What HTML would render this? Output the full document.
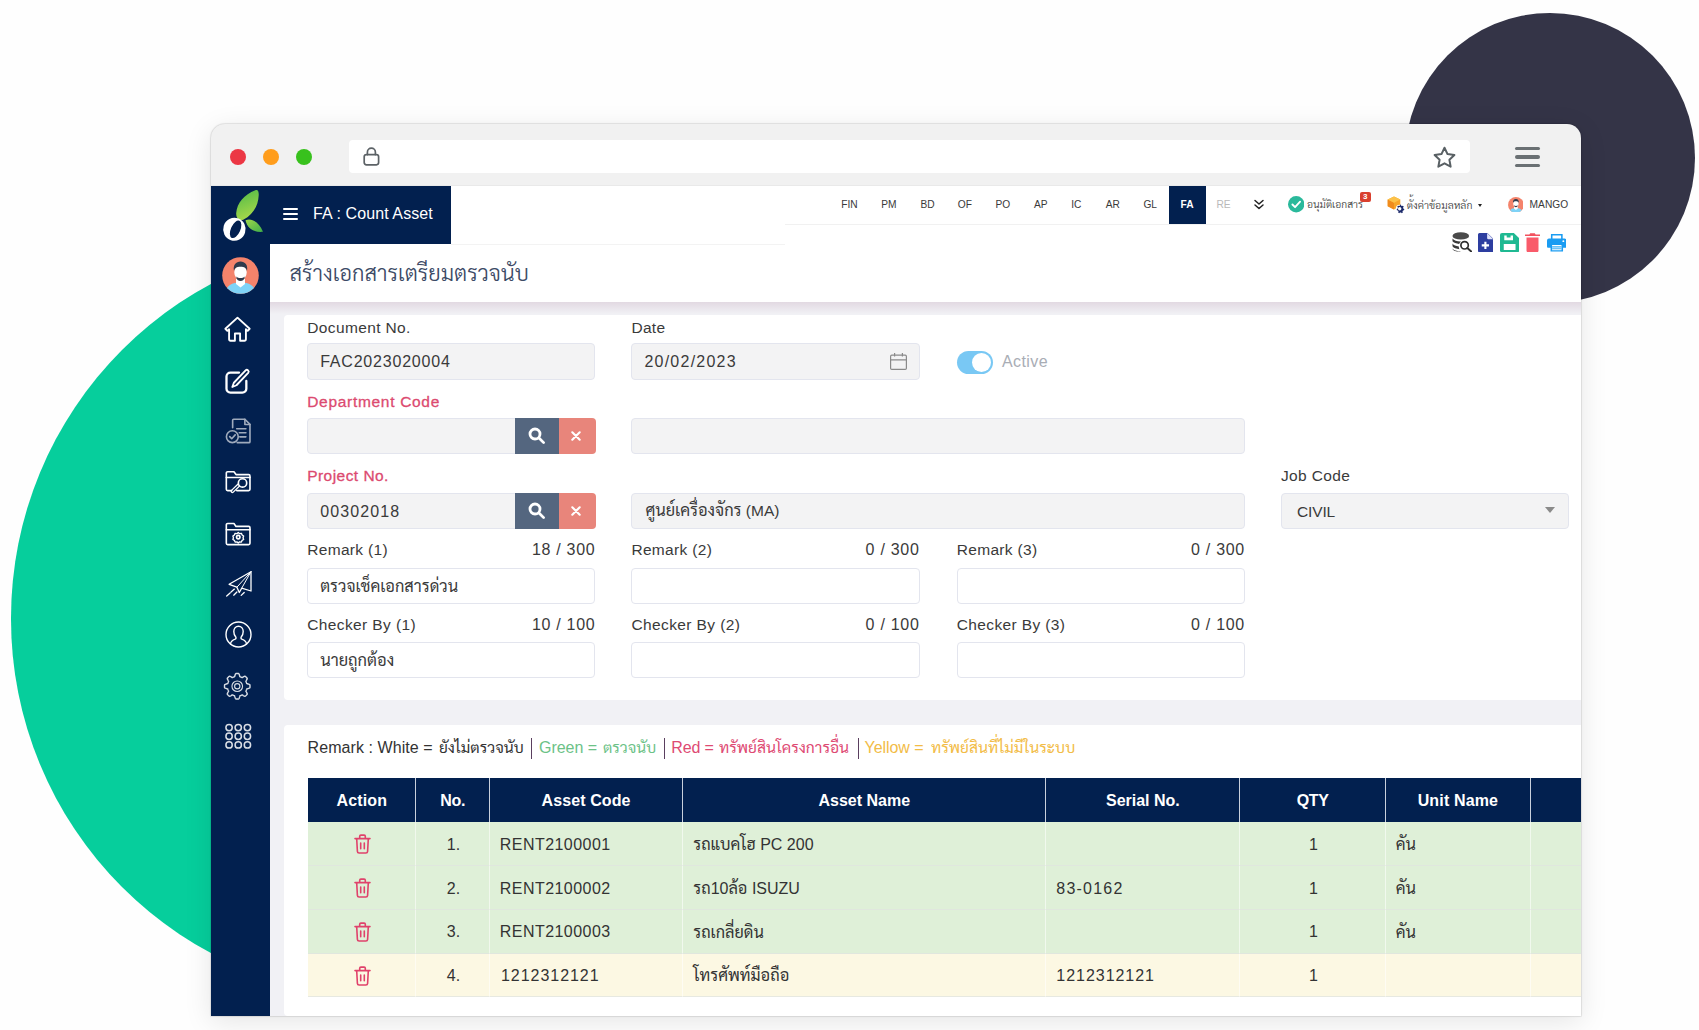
<!DOCTYPE html>
<html lang="th">
<head>
<meta charset="utf-8">
<title>FA : Count Asset</title>
<style>
*{box-sizing:border-box;margin:0;padding:0}
html,body{width:1699px;height:1030px;overflow:hidden;background:#fefefe}
body{position:relative;font-family:"Liberation Sans","Sarabun","Noto Sans Thai Looped","Loma",sans-serif;color:#3a3a3a;font-size:15px}
.abs{position:absolute}
#blobG{left:10.9px;top:239.4px;width:758.6px;height:758.6px;border-radius:50%;background:#06ce9c}
#blobD{left:1405px;top:13px;width:290px;height:290px;border-radius:50%;background:#343447}
#win{left:211px;top:124px;width:1370px;height:892px;border-radius:14px 14px 0 0;background:#f1f1f1;box-shadow:0 6px 28px rgba(0,0,0,.10),0 0 2px rgba(0,0,0,.18),0 0 0 1px rgba(0,0,0,.04);overflow:hidden}
/* all children of #win positioned relative to window (offset 211,124) */
.dot{width:16px;height:16px;border-radius:50%;top:24.6px}
#url{left:138px;top:16px;width:1121px;height:33px;background:#fff;border-radius:4px}
#app{left:0;top:62px;width:1370px;height:830px;background:#f1f1f5}
#side{left:0;top:0;width:59px;height:830px;background:#02204f}
#navtab{left:59px;top:0;width:181px;height:58px;background:#02204f;color:#fff}
#head{left:59px;top:0;width:1311px;height:116px;background:#fff}
#menu{left:0;top:0;width:1311px;height:38px}
.mi{position:absolute;top:0;height:38px;line-height:38px;font-size:10.2px;color:#3a3a3a;white-space:nowrap}
#title{left:19.4px;top:71.6px;font-size:22px;color:#3c4a66;white-space:nowrap;line-height:32px}
#hshadow{left:59px;top:116px;width:1311px;height:12px;background:linear-gradient(#e2d9e2,#f1f1f5)}
.card{background:#fff;border-radius:4px 0 0 4px}
.lbl{position:absolute;font-size:15.5px;line-height:20px;color:#3a3a3a;white-space:nowrap}
.lbl.req{color:#dc4a70;-webkit-text-stroke:.3px #dc4a70}
.cnt{position:absolute;font-size:16px;line-height:20px;color:#3a3a3a;white-space:nowrap;text-align:right}
.inp{position:absolute;height:36px;border:1px solid #e3e5ee;border-radius:4px;background:#fff;font-size:15.5px;line-height:34px;padding-left:12px;color:#3a3a3a;white-space:nowrap;overflow:hidden}
.inp.dis{background:#f3f3f4}
.btnS{position:absolute;width:44px;height:36px;background:#54667f}
.btnX{position:absolute;width:37px;height:36px;background:#e8857b;border-radius:0 4px 4px 0}
.sic{left:13.600px;width:26.500px;height:26.500px;fill:none;stroke:#fff;stroke-width:1.6;stroke-linejoin:round;stroke-linecap:round;overflow:visible}
.sic.dim{opacity:.62}
.sic.dim2{opacity:.85}
.num{font-size:16px}
.inp .num{position:relative;top:1px}
.td .num{position:relative;top:1.3px}
.td svg{position:relative;top:.9px;left:1px}
.td.c .num{left:.8px}
.tr.hd .td span{position:relative;top:.8px}
.th{font-weight:300}
.td .th{font-size:16.3px;font-weight:400}
.inp .th{font-weight:400}
#th_ma{font-size:16.4px}
.seg{position:absolute;top:0}
.seg.th{font-weight:400}
.seg.bar{width:1.5px;height:21px;top:1px;background:#5a3f5f}
.tr{display:flex;height:43.85px}
.tr.hd{height:43.6px;background:#02204f;color:#fff;font-weight:bold;font-size:16px}
.tr.g{background:#dff0d8}
.tr.y{background:#fcf8e3}
.td{flex:none;height:100%;border-right:1.5px solid rgba(255,255,255,.55);border-bottom:1.5px solid rgba(225,228,225,.75);padding:0 10px;display:flex;align-items:center;font-size:16px;white-space:nowrap;color:#333;overflow:hidden}
.tr.hd .td{justify-content:center;color:#fff;border-right:1.5px solid #c9d0dc;border-bottom:0}
.td.c{justify-content:center}
table{border-collapse:collapse}
</style>
</head>
<body>
<div id="blobG" class="abs"></div>
<div id="blobD" class="abs"></div>
<div id="win" class="abs">
  <!-- browser chrome -->
  <div class="abs dot" style="left:19px;background:#ec3744"></div>
  <div class="abs dot" style="left:52px;background:#ff9d1c"></div>
  <div class="abs dot" style="left:85px;background:#38c11d"></div>
  <div id="url" class="abs">
    <svg class="abs" style="left:13px;top:6px" width="20" height="21" viewBox="0 0 20 21" fill="none" stroke="#5c6266" stroke-width="1.7" stroke-linecap="round" stroke-linejoin="round"><rect x="2.2" y="8.6" width="14.4" height="10.2" rx="2.2"/><path d="M5.4 8.6V6.2a4 4 0 0 1 8 0v2.4"/></svg>
    <svg class="abs" style="left:1082.700px;top:4.800px" width="25" height="25" viewBox="0 0 24 24" fill="none" stroke="#596064" stroke-width="1.900" stroke-linejoin="round"><path d="M12 2.6l2.9 6.1 6.6.9-4.8 4.6 1.2 6.6L12 17.6l-5.9 3.2 1.2-6.6L2.5 9.6l6.6-.9z"/></svg>
  </div>
  <div class="abs" style="left:1304.200px;top:23.200px;width:25px;height:3.200px;border-radius:2px;background:#6a7073"></div>
  <div class="abs" style="left:1304.200px;top:31.400px;width:25px;height:3.200px;border-radius:2px;background:#6a7073"></div>
  <div class="abs" style="left:1304.200px;top:39.700px;width:25px;height:3.200px;border-radius:2px;background:#6a7073"></div>
  <div class="abs" style="left:0;top:61px;width:1370px;height:1px;background:#e9e9e9"></div>
  <div id="app" class="abs">
    <div id="head" class="abs">
      <div id="menu" class="abs">
        <div class="mi" style="left:579.4px;transform:translateX(-50%)">FIN</div>
        <div class="mi" style="left:618.8px;transform:translateX(-50%)">PM</div>
        <div class="mi" style="left:657.5px;transform:translateX(-50%)">BD</div>
        <div class="mi" style="left:694.9px;transform:translateX(-50%)">OF</div>
        <div class="mi" style="left:732.9px;transform:translateX(-50%)">PO</div>
        <div class="mi" style="left:770.8px;transform:translateX(-50%)">AP</div>
        <div class="mi" style="left:806.3px;transform:translateX(-50%)">IC</div>
        <div class="mi" style="left:842.8px;transform:translateX(-50%)">AR</div>
        <div class="mi" style="left:880.2px;transform:translateX(-50%)">GL</div>
        <div class="abs" style="left:899px;top:0;width:36.500px;height:38px;background:#02204f"></div>
        <div class="mi" style="left:917.1px;transform:translateX(-50%);color:#fff;font-weight:bold">FA</div>
        <div class="mi" style="left:953.5px;transform:translateX(-50%);color:#b9b9b9">RE</div>
        <svg class="abs" style="left:982.500px;top:12.500px" width="12" height="12" viewBox="0 0 12 12" fill="none" stroke="#222" stroke-width="1.500" stroke-linecap="round" stroke-linejoin="round"><path d="M2 1.500l4 3.500 4-3.500M2 6l4 3.500 4-3.500"/></svg>
        <svg class="abs" style="left:1017.500px;top:10.300px" width="16.400" height="16.400" viewBox="0 0 16 16"><circle cx="8" cy="8" r="8" fill="#2ab99b"/><path d="M4.300 8.300l2.600 2.600 4.900-5.300" fill="none" stroke="#fff" stroke-width="1.800" stroke-linecap="round" stroke-linejoin="round"/></svg>
        <div class="mi th" id="m_ap" style="left:1037px;font-size:10.36px">อนุมัติเอกสาร</div>
        <div class="abs" style="left:1089.600px;top:5.700px;width:11.200px;height:10.200px;background:#d9402f;border-radius:2px;color:#fff;font-size:8px;font-weight:bold;line-height:10.500px;text-align:center">3</div>
        <svg class="abs" style="left:1116.500px;top:9.800px" width="18" height="18" viewBox="0 0 18 18"><path d="M7 .6l6.300 3v6.600L7 13.400.7 10.200V3.600z" fill="#f7a62b"/><path d="M.7 3.600L7 6.800v6.600L.7 10.200z" fill="#f08b1d"/><path d="M7 .6l6.300 3L7 6.800.7 3.600z" fill="#fcc24a"/><circle cx="12.700" cy="12.700" r="3.900" fill="#fff"/><path d="M12.700 8.300l1 .2.300 1.100.9.500 1.100-.4.700.9-.6 1 .2 1 1 .6-.2 1.100-1.100.3-.5.900.3 1.100-.9.600-.9-.7h-1l-.9.700-.9-.6.300-1.100-.5-.9-1.100-.3-.2-1.100 1-.6.200-1-.6-1 .7-.9 1.100.4.900-.5.300-1.100z" fill="#1c2a6b"/><circle cx="12.700" cy="12.700" r="1.700" fill="#fff"/></svg>
        <div class="mi th" id="m_set" style="left:1136.700px;font-size:10.55px">ตั้งค่าข้อมูลหลัก</div>
        <div class="abs" style="left:1207.600px;top:17.600px;width:0;height:0;border-left:2.700px solid transparent;border-right:2.700px solid transparent;border-top:3.200px solid #222"></div>
        <svg class="abs" style="left:1237.500px;top:10.500px" width="15.800" height="15.800" viewBox="0 0 37 37"><defs><clipPath id="avc2"><circle cx="18.500" cy="18.500" r="18.300"/></clipPath></defs><circle cx="18.500" cy="18.500" r="18.300" fill="#f4836b"/><g clip-path="url(#avc2)"><path d="M3 37C4 28 10 25.500 18.500 25.500S33 28 34 37z" fill="#7fd3f7"/><path d="M14 22h9v5l-4.500 3.500L14 27z" fill="#fff"/><ellipse cx="18.500" cy="15.500" rx="6.200" ry="7.600" fill="#fff"/><path d="M12 14c-1.200-6 2-9.500 6.500-9.500S26.200 8 25 14c-.8-3-2.500-4.200-6.500-4.200S12.800 11 12 14z" fill="#2f3a4c"/><path d="M14.200 19.500c1.200 1.200 2.600 1.600 4.300 1.600s3.100-.4 4.300-1.600c-.3 3-2 4.600-4.300 4.600s-4-1.600-4.300-4.600z" fill="#2f3a4c"/></g></svg>
        <div class="mi" id="m_mango" style="left:1259.600px">MANGO</div>
      </div>
      <div class="abs" style="left:515px;top:38px;width:796px;height:1px;background:#f1f1f1"></div>
      <div class="abs" style="left:181px;top:57.500px;width:334px;height:1px;background:#f3f3f3"></div>
      <!-- toolbar icons -->
      <svg class="abs" style="left:1181.800px;top:46px" width="20" height="20" viewBox="0 0 20 20"><ellipse cx="8.800" cy="3.900" rx="8.300" ry="3.700" fill="#4a4a4a"/><path d="M.500 6.600c1.500 2.200 5 2.900 8.500 2.800-.9.700-1.500 1.500-1.900 2.600C4.300 11.700 1.600 10.800.500 9.300zM.500 11.600c1 1.700 3.600 2.600 6.300 2.900 0 1 .2 1.900.6 2.700-3-.3-5.800-1.200-6.900-2.900zM.500 16.600c1.200 1.800 4.300 2.600 7.500 2.800.5.300 1 .5 1.500.6H8.800c-4.600 0-8.300-1.500-8.300-3.400z" fill="#3a3a3a"/><circle cx="12.600" cy="13.300" r="3.700" fill="none" stroke="#2f2f2f" stroke-width="1.700"/><path d="M15.300 16l3.900 3.500" stroke="#2f2f2f" stroke-width="1.900" stroke-linecap="round"/></svg>
      <svg class="abs" style="left:1208px;top:46.800px" width="15.200" height="19.400" viewBox="0 0 15 19"><path d="M1.500 0h7.800L15 5.600V17.500A1.500 1.500 0 0 1 13.500 19h-12A1.500 1.500 0 0 1 0 17.500v-16A1.500 1.500 0 0 1 1.500 0z" fill="#2d3ea0"/><path d="M9 0l6 6H10.200A1.200 1.200 0 0 1 9 4.800z" fill="#dfe3fa"/><path d="M7.300 8.600v7.200M3.700 12.200h7.200" stroke="#fff" stroke-width="2.100"/></svg>
      <svg class="abs" style="left:1229.700px;top:46.800px" width="19.300" height="19.400" viewBox="0 0 19 19"><path d="M2 0h11.600L19 5.200V17a2 2 0 0 1-2 2H2a2 2 0 0 1-2-2V2a2 2 0 0 1 2-2z" fill="#1fb992"/><path d="M4.200 2.400h2.400v2h3.800v-2h2.400v4.600H4.200zM3.700 10.800h11.600v5.900H3.700z" fill="#fff"/></svg>
      <svg class="abs" style="left:1255.200px;top:46.800px" width="15" height="19.400" viewBox="0 0 15 19"><path d="M5.200 0h4.600l.8 1.300H15v1.500H0V1.300h4.400z" fill="#f2525f"/><path d="M1.500 4.300h12V17.300A1.700 1.700 0 0 1 11.800 19H3.200a1.700 1.700 0 0 1-1.700-1.700z" fill="#f95b6a"/></svg>
      <svg class="abs" style="left:1276.600px;top:48px" width="19.600" height="17.600" viewBox="0 0 20 18"><path d="M4 0h12v5H4z" fill="#1a9cf2"/><path d="M5.600 1.600h8.800v3.400H5.600z" fill="#fff"/><path d="M2 4.600h16a2 2 0 0 1 2 2V13a1 1 0 0 1-1 1H1a1 1 0 0 1-1-1V6.600a2 2 0 0 1 2-2z" fill="#1a9cf2"/><circle cx="16.700" cy="7.300" r="1" fill="#fff"/><path d="M3.600 9.800h12.800V18H3.600z" fill="#1a9cf2"/><path d="M5.200 11.300h9.600v5.200H5.200z" fill="#fff"/><path d="M5.200 12.600h9.600v1.100H5.200zM5.200 14.600h9.600v1.100H5.200z" fill="#3fb0f5"/></svg>
      <div id="title" style="font-size:21.94px" class="abs th">สร้างเอกสารเตรียมตรวจนับ</div>
    </div>
    <div id="hshadow" class="abs"></div>
    <div id="navtab" class="abs">
      <div class="abs" style="left:13px;top:22px;width:15px;height:2.4px;background:#fff;border-radius:1px"></div>
      <div class="abs" style="left:13px;top:27px;width:15px;height:2.4px;background:#fff;border-radius:1px"></div>
      <div class="abs" style="left:13px;top:32px;width:15px;height:2.4px;background:#fff;border-radius:1px"></div>
      <div class="abs" id="navtxt" style="left:43px;top:17.400px;font-size:16px;line-height:22px;white-space:nowrap;letter-spacing:0.100px">FA : Count Asset</div>
    </div>
    <div id="side" class="abs">
      <!-- logo -->
      <svg class="abs" style="left:8px;top:0" width="48" height="58" viewBox="0 0 48 58">
        <defs><linearGradient id="lg1" x1="0" y1="0" x2="0.3" y2="1"><stop offset="0" stop-color="#4db848"/><stop offset="1" stop-color="#a4d84a"/></linearGradient>
        <linearGradient id="lg2" x1="0" y1="0" x2="1" y2="1"><stop offset="0" stop-color="#9fd64b"/><stop offset="1" stop-color="#3fae49"/></linearGradient></defs>
        <path d="M37.600 4.200C40.600 3.200 41.200 6 41 9.500C40.400 20 35.500 28.500 25.500 33.800C21 34.800 18.200 31.800 18.500 27C19.300 17 26.500 8.500 37.600 4.200z" fill="url(#lg1)" transform="translate(-1.300 0)"/>
        <path d="M26.5 34.2C33 31.5 40 36.5 44 45.8C36 46.5 28.5 43.5 26.5 34.2z" fill="url(#lg2)"/>
        <ellipse cx="15.400" cy="43.300" rx="11.200" ry="11.500" transform="rotate(18 15.400 43.300)" fill="#fff"/>
        <ellipse cx="16.600" cy="43.300" rx="4.700" ry="9.400" transform="rotate(24 16.600 43.300)" fill="#02204f"/>
      </svg>
      <!-- avatar -->
      <svg class="abs" style="left:11px;top:71px" width="37" height="37" viewBox="0 0 37 37">
        <defs><clipPath id="avc"><circle cx="18.5" cy="18.5" r="18.3"/></clipPath></defs>
        <circle cx="18.5" cy="18.5" r="18.3" fill="#f4836b"/>
        <g clip-path="url(#avc)">
          <path d="M3 37C4 28 10 25.5 18.5 25.5S33 28 34 37z" fill="#7fd3f7"/>
          <path d="M14 22h9v5l-4.5 3.5L14 27z" fill="#fff"/>
          <ellipse cx="18.5" cy="15.5" rx="6.2" ry="7.6" fill="#fff"/>
          <path d="M12 14c-1.2-6 2-9.5 6.500-9.500S26.200 8 25 14c-.8-3-2.500-4.200-6.500-4.200S12.800 11 12 14z" fill="#2f3a4c"/>
          <path d="M14.200 19.500c1.200 1.200 2.600 1.600 4.300 1.600s3.100-.4 4.300-1.600c-.3 3-2 4.600-4.300 4.600s-4-1.600-4.300-4.600z" fill="#2f3a4c"/>
        </g>
      </svg>
      <!-- side icons -->
      <svg class="abs sic" style="top:130.200px;left:12.700px;width:27px;height:27px;stroke-width:1.800" viewBox="0 0 26 26"><path d="M13 1.6L1.3 12.3l1.9 2 1.700-1.500v9.700a1.300 1.300 0 0 0 1.300 1.300h4.300v-7h5v7h4.300a1.300 1.300 0 0 0 1.300-1.300v-9.700l1.700 1.500 1.900-2z"/></svg>
      <svg class="abs sic" style="top:181.500px;left:13px;width:27px;height:27px;stroke-width:2.200" viewBox="0 0 26 26"><path d="M14.500 4.400H6.200a3.800 3.800 0 0 0-3.800 3.800v11.700a3.800 3.800 0 0 0 3.800 3.800h11.500a3.800 3.800 0 0 0 3.800-3.800v-7.400"/><path d="M20.800 2.300a1.700 1.700 0 0 1 2.500 2.300L12 16.600l-4 1.700 1.500-4.100z" stroke-width="1.800"/></svg>
      <svg class="abs sic dim" style="top:232px" viewBox="0 0 26 26"><path d="M7.500 9.500V2.200a1 1 0 0 1 1-1h11l5 5v17a1 1 0 0 1-1 1H12"/><path d="M19.500 1.400v5h5"/><path d="M11.500 10.500h9M14 14.500h6.500M14.500 18.500h6"/><circle cx="7.200" cy="18.300" r="5.800"/><path d="M4.600 18.300l2 2 3.400-3.700"/></svg>
      <svg class="abs sic" style="top:284px" viewBox="0 0 26 26"><path d="M6.500 20.200H2.600a1.300 1.300 0 0 1-1.300-1.300V3a1.300 1.300 0 0 1 1.300-1.300h6.200l2 2.800h12.400a1.300 1.300 0 0 1 1.300 1.300v13.100a1.300 1.300 0 0 1-1.300 1.300H11.500"/><path d="M1.300 7.300h23.200"/><circle cx="17.200" cy="12.700" r="4.100"/><path d="M14.300 15.700l-6.200 6a1.200 1.200 0 0 1-1.700-1.700l6.200-6" stroke-width="1.300"/></svg>
      <svg class="abs sic" style="top:335px" viewBox="0 0 26 26"><path d="M2.600 23.200a1.300 1.300 0 0 1-1.300-1.300V3.800a1.300 1.300 0 0 1 1.300-1.300h6.200l2 2.800h12.400a1.300 1.300 0 0 1 1.300 1.300v15.300a1.300 1.300 0 0 1-1.300 1.300z"/><path d="M1.300 8.600h23.200"/><circle cx="13" cy="15.800" r="1.700"/><path d="M13 11.200l1.300 1.200 1.800-.3.700 1.700 1.500 1-0.600 1.600.6 1.700-1.500.9-.7 1.700-1.800-.3-1.300 1.200-1.300-1.200-1.800.3-.7-1.700-1.500-.9.600-1.700-.6-1.600 1.500-1 .7-1.700 1.800.3z" stroke-width="1.300"/></svg>
      <svg class="abs sic" style="top:384px;width:28px;height:28px;stroke-width:1.300" viewBox="0 0 28 28"><path d="M26 1.700L4.100 14.300l7.800 2.900 2.400 5.300 2.400-4.300L26 21z"/><path d="M26 1.700L11.900 17.200M26 1.700L16.700 18.200" stroke-width="1"/><path d="M9.400 19.100L1.200 26.400M11.900 22L8 25.900M19.200 22.500l-3 2.900" stroke-dasharray="4.500 1.300"/></svg>
      <svg class="abs sic" style="top:435px;width:27px;height:27px;stroke-width:1.400" viewBox="0 0 27 27"><circle cx="13.500" cy="13.500" r="12.500"/><path d="M5.500 23c.3-3 2.300-4 4.700-4.800 1-.4 1-1.600.4-2.500-1.200-1.500-1.800-3.300-1.800-5.200 0-3 2-5.200 4.700-5.200s4.700 2.200 4.700 5.200c0 1.900-.6 3.700-1.800 5.200-.6.900-.6 2.100.4 2.500 2.400.8 4.400 1.800 4.700 4.800"/></svg>
      <svg class="abs sic dim2" style="top:486.500px;left:13.300px;stroke-width:1.400" viewBox="0 0 26 26"><circle cx="13" cy="13" r="5.200" stroke-width="1.100"/><circle cx="13" cy="13" r="2.600" stroke-width="1.100"/><path d="M13.00 0.50L13.33 0.50L13.65 0.52L13.98 0.54L14.31 0.57L14.61 0.75L14.86 1.27L15.07 1.83L15.25 2.40L15.41 2.96L15.55 3.50L15.75 3.70L16.00 3.77L16.24 3.86L16.48 3.94L16.71 4.04L16.95 4.14L17.18 4.24L17.40 4.36L17.63 4.48L17.92 4.48L18.39 4.20L18.90 3.91L19.44 3.64L19.98 3.39L20.52 3.19L20.87 3.29L21.12 3.49L21.36 3.71L21.60 3.93L21.84 4.16L22.07 4.40L22.29 4.64L22.51 4.88L22.71 5.13L22.81 5.48L22.61 6.02L22.36 6.56L22.09 7.10L21.80 7.61L21.52 8.08L21.52 8.37L21.64 8.60L21.76 8.82L21.86 9.05L21.96 9.29L22.06 9.52L22.14 9.76L22.23 10.00L22.30 10.25L22.50 10.45L23.04 10.59L23.60 10.75L24.17 10.93L24.73 11.14L25.25 11.39L25.43 11.69L25.46 12.02L25.48 12.35L25.50 12.67L25.50 13.00L25.50 13.33L25.48 13.65L25.46 13.98L25.43 14.31L25.25 14.61L24.73 14.86L24.17 15.07L23.60 15.25L23.04 15.41L22.50 15.55L22.30 15.75L22.23 16.00L22.14 16.24L22.06 16.48L21.96 16.71L21.86 16.95L21.76 17.18L21.64 17.40L21.52 17.63L21.52 17.92L21.80 18.39L22.09 18.90L22.36 19.44L22.61 19.98L22.81 20.52L22.71 20.87L22.51 21.12L22.29 21.36L22.07 21.60L21.84 21.84L21.60 22.07L21.36 22.29L21.12 22.51L20.87 22.71L20.52 22.81L19.98 22.61L19.44 22.36L18.90 22.09L18.39 21.80L17.92 21.52L17.63 21.52L17.40 21.64L17.18 21.76L16.95 21.86L16.71 21.96L16.48 22.06L16.24 22.14L16.00 22.23L15.75 22.30L15.55 22.50L15.41 23.04L15.25 23.60L15.07 24.17L14.86 24.73L14.61 25.25L14.31 25.43L13.98 25.46L13.65 25.48L13.33 25.50L13.00 25.50L12.67 25.50L12.35 25.48L12.02 25.46L11.69 25.43L11.39 25.25L11.14 24.73L10.93 24.17L10.75 23.60L10.59 23.04L10.45 22.50L10.25 22.30L10.00 22.23L9.76 22.14L9.52 22.06L9.29 21.96L9.05 21.86L8.82 21.76L8.60 21.64L8.37 21.52L8.08 21.52L7.61 21.80L7.10 22.09L6.56 22.36L6.02 22.61L5.48 22.81L5.13 22.71L4.88 22.51L4.64 22.29L4.40 22.07L4.16 21.84L3.93 21.60L3.71 21.36L3.49 21.12L3.29 20.87L3.19 20.52L3.39 19.98L3.64 19.44L3.91 18.90L4.20 18.39L4.48 17.92L4.48 17.63L4.36 17.40L4.24 17.18L4.14 16.95L4.04 16.71L3.94 16.48L3.86 16.24L3.77 16.00L3.70 15.75L3.50 15.55L2.96 15.41L2.40 15.25L1.83 15.07L1.27 14.86L0.75 14.61L0.57 14.31L0.54 13.98L0.52 13.65L0.50 13.33L0.50 13.00L0.50 12.67L0.52 12.35L0.54 12.02L0.57 11.69L0.75 11.39L1.27 11.14L1.83 10.93L2.40 10.75L2.96 10.59L3.50 10.45L3.70 10.25L3.77 10.00L3.86 9.76L3.94 9.52L4.04 9.29L4.14 9.05L4.24 8.82L4.36 8.60L4.48 8.37L4.48 8.08L4.20 7.61L3.91 7.10L3.64 6.56L3.39 6.02L3.19 5.48L3.29 5.13L3.49 4.88L3.71 4.64L3.93 4.40L4.16 4.16L4.40 3.93L4.64 3.71L4.88 3.49L5.13 3.29L5.48 3.19L6.02 3.39L6.56 3.64L7.10 3.91L7.61 4.20L8.08 4.48L8.37 4.48L8.60 4.36L8.82 4.24L9.05 4.14L9.29 4.04L9.52 3.94L9.76 3.86L10.00 3.77L10.25 3.70L10.45 3.50L10.59 2.96L10.75 2.40L10.93 1.83L11.14 1.27L11.39 0.75L11.69 0.57L12.02 0.54L12.35 0.52L12.67 0.50z"/></svg>
      <svg class="abs sic dim2" style="top:537px;left:13.600px;stroke-width:1.500" viewBox="0 0 26 26"><circle cx="4" cy="4.500" r="3.100"/><circle cx="13" cy="4.500" r="3.100"/><circle cx="22" cy="4.500" r="3.100"/><circle cx="4" cy="13" r="3.100"/><circle cx="13" cy="13" r="3.100"/><circle cx="22" cy="13" r="3.100"/><circle cx="4" cy="21.500" r="3.100"/><circle cx="13" cy="21.500" r="3.100"/><circle cx="22" cy="21.500" r="3.100"/></svg>
    </div>
    <div id="card1" class="abs card" style="left:73px;top:129px;width:1297px;height:385px">
<div class="lbl " id="l_doc" style="left:23.2px;top:2.5px;letter-spacing:0.377px">Document No.</div>
<div class="lbl" id="l_date" style="left:347.4px;top:2.5px;letter-spacing:0.312px">Date</div>
<div class="inp dis" style="left:23.2px;top:28.3px;width:288.2px;height:36.6px;line-height:34.6px;"><span id="t_fac" style="letter-spacing:0.792px" class="num">FAC2023020004</span></div>
<div class="inp dis" style="left:347.4px;top:28.3px;width:288.2px;height:36.6px;line-height:34.6px;"><span id="t_date" style="letter-spacing:1.242px" class="num">20/02/2023</span></div>
<svg class="abs" style="left:605.0px;top:37.0px" width="19" height="19" viewBox="0 0 19 19" fill="none" stroke="#8a8a8a" stroke-width="1.200"><rect x="1.600" y="3.200" width="15.800" height="14.200" rx="1.200"/><path d="M1.600 7.800h15.800M5.600 1v3.600M13.400 1v3.600"/></svg>
<div class="abs" style="left:672.8px;top:35.8px;width:36px;height:23px;border-radius:12px;background:#79c8f4"><div class="abs" style="right:2px;top:2px;width:19px;height:19px;border-radius:50%;background:#fff"></div></div>
<div class="lbl" id="l_act" style="left:718.0px;top:36.8px;color:#a9adb5;font-size:16px;letter-spacing:0.404px">Active</div>
<div class="lbl req" id="l_dep" style="left:23.2px;top:76.6px;letter-spacing:0.697px">Department Code</div>
<div class="inp dis" style="left:23.2px;top:102.8px;width:288.2px;height:36.0px;line-height:34.0px;"></div>
<div class="btnS" style="left:231.0px;top:102.8px"><svg class="abs" style="left:13px;top:9.400px" width="17.500" height="17.500" viewBox="0 0 15 15" fill="none" stroke="#fff" stroke-width="2.400" stroke-linecap="round"><circle cx="6" cy="6" r="4.300"/><path d="M9.400 9.400l4 4"/></svg></div><div class="btnX" style="left:275.0px;top:102.8px"><svg class="abs" style="left:11.700px;top:12.800px" width="10" height="10" viewBox="0 0 10 10" fill="none" stroke="#fff" stroke-width="2.100" stroke-linecap="round"><path d="M1.300 1.300l7.400 7.400M8.700 1.300l-7.400 7.400"/></svg></div>
<div class="inp dis" style="left:347.4px;top:102.8px;width:613.2px;height:36.0px;line-height:34.0px;"></div>
<div class="lbl req" id="l_prj" style="left:23.2px;top:150.7px;letter-spacing:0.457px">Project No.</div>
<div class="inp dis" style="left:23.2px;top:178.0px;width:288.2px;height:35.5px;line-height:33.5px;"><span id="t_prj" style="letter-spacing:1.114px" class="num">00302018</span></div>
<div class="btnS" style="left:231.0px;top:178.0px;height:35.500px"><svg class="abs" style="left:13px;top:9.400px" width="17.500" height="17.500" viewBox="0 0 15 15" fill="none" stroke="#fff" stroke-width="2.400" stroke-linecap="round"><circle cx="6" cy="6" r="4.300"/><path d="M9.400 9.400l4 4"/></svg></div><div class="btnX" style="left:275.0px;top:178.0px;height:35.500px"><svg class="abs" style="left:11.700px;top:12.800px" width="10" height="10" viewBox="0 0 10 10" fill="none" stroke="#fff" stroke-width="2.100" stroke-linecap="round"><path d="M1.300 1.300l7.400 7.400M8.700 1.300l-7.400 7.400"/></svg></div>
<div class="inp dis" style="left:347.4px;top:178.0px;width:613.2px;height:35.5px;line-height:33.5px;padding-left:13px"><span id="t_ma"><span class="th" id="th_ma">ศูนย์เครื่องจักร</span> (MA)</span></div>
<div class="lbl " id="l_job" style="left:997.0px;top:150.7px;letter-spacing:0.368px">Job Code</div>
<div class="inp dis" style="left:997.0px;top:178.0px;width:288.2px;height:35.5px;line-height:33.5px;padding-left:15px"><span class="num" id="t_civil" style="font-size:15.5px;letter-spacing:-0.153px">CIVIL</span></div>
<div class="abs" style="left:1261.0px;top:192.3px;width:0;height:0;border-left:5.700px solid transparent;border-right:5.700px solid transparent;border-top:6px solid #8a8a8a"></div>
<div class="lbl " id="l_rem1" style="left:23.2px;top:225.1px;letter-spacing:0.328px">Remark (1)</div>
<div class="cnt" id="c1" style="left:211.4px;width:100px;top:224.8px;letter-spacing:0.696px">18 / 300</div>
<div class="inp " style="left:23.2px;top:252.8px;width:288.2px;height:36.0px;line-height:34.0px;"><span id="t_rem1" style="font-size:16.35px" class="th">ตรวจเช็คเอกสารด่วน</span></div>
<div class="lbl " id="l_rem2" style="left:347.4px;top:225.1px;letter-spacing:0.328px">Remark (2)</div>
<div class="cnt" id="c2" style="left:535.6px;width:100px;top:224.8px;letter-spacing:0.723px">0 / 300</div>
<div class="inp " style="left:347.4px;top:252.8px;width:288.2px;height:36.0px;line-height:34.0px;"></div>
<div class="lbl " id="l_rem3" style="left:672.8px;top:225.1px;letter-spacing:0.308px">Remark (3)</div>
<div class="cnt" id="c3" style="left:861.0px;width:100px;top:224.8px;letter-spacing:0.723px">0 / 300</div>
<div class="inp " style="left:672.8px;top:252.8px;width:288.2px;height:36.0px;line-height:34.0px;"></div>
<div class="lbl " id="l_chk1" style="left:23.2px;top:300.3px;letter-spacing:0.395px">Checker By (1)</div>
<div class="cnt" id="c4" style="left:211.4px;width:100px;top:300.0px;letter-spacing:0.696px">10 / 100</div>
<div class="inp " style="left:23.2px;top:326.8px;width:288.2px;height:36.0px;line-height:34.0px;"><span id="t_chk1" style="font-size:16.46px" class="th">นายถูกต้อง</span></div>
<div class="lbl " id="l_chk2" style="left:347.4px;top:300.3px;letter-spacing:0.395px">Checker By (2)</div>
<div class="cnt" id="c5" style="left:535.6px;width:100px;top:300.0px;letter-spacing:0.723px">0 / 100</div>
<div class="inp " style="left:347.4px;top:326.8px;width:288.2px;height:36.0px;line-height:34.0px;"></div>
<div class="lbl " id="l_chk3" style="left:672.8px;top:300.3px;letter-spacing:0.373px">Checker By (3)</div>
<div class="cnt" id="c6" style="left:861.0px;width:100px;top:300.0px;letter-spacing:0.723px">0 / 100</div>
<div class="inp " style="left:672.8px;top:326.8px;width:288.2px;height:36.0px;line-height:34.0px;"></div>
</div>
    <div id="card2" class="abs card" style="left:73px;top:539px;width:1297px;height:291px;overflow:hidden">
<div class="abs" id="rmk" style="left:23.6px;top:11.8px;font-size:16px;line-height:22px;white-space:nowrap;color:#333"><span id="r1" class="seg" style="left:0;letter-spacing:0.069px">Remark : White = </span><span id="r1t" class="seg th" style="left:131.3px;font-size:15.51px">ยังไม่ตรวจนับ</span><span class="seg bar" style="left:223.4px"></span><span id="r2" class="seg" style="left:231.4px;color:#6cc287;letter-spacing:-0.021px">Green = </span><span id="r2t" class="seg th" style="left:295.4px;color:#6cc287;font-size:15.46px">ตรวจนับ</span><span class="seg bar" style="left:356.2px"></span><span id="r3" class="seg" style="left:363.7px;color:#de4a73;letter-spacing:-0.140px">Red = </span><span id="r3t" class="seg th" style="left:411.4px;color:#de4a73;font-size:15.60px">ทรัพย์สินโครงการอื่น</span><span class="seg bar" style="left:550.0px"></span><span id="r4" class="seg" style="left:557.0px;color:#f2bc47;letter-spacing:-0.073px">Yellow = </span><span id="r4t" class="seg th" style="left:623.4px;color:#f2bc47;font-size:15.60px">ทรัพย์สินที่ไม่มีในระบบ</span></div>
<div class="abs" id="tbl" style="left:24.2px;top:53.4px;width:1367.8px">
<div class="tr hd"><div class="td" style="width:108.3px"><span id="h0" style="letter-spacing:0.136px">Action</span></div><div class="td" style="width:73.3px"><span id="h1" style="letter-spacing:-0.294px">No.</span></div><div class="td" style="width:193.5px"><span id="h2" style="letter-spacing:0.097px">Asset Code</span></div><div class="td" style="width:363.0px"><span id="h3">Asset Name</span></div><div class="td" style="width:194.2px"><span id="h4">Serial No.</span></div><div class="td" style="width:145.3px"><span id="h5" style="letter-spacing:-0.464px">QTY</span></div><div class="td" style="width:145.3px"><span id="h6" style="letter-spacing:0.153px">Unit Name</span></div><div class="td" style="width:144.9px"><span id="h7"></span></div></div>
<div class="tr g"><div class="td c" style="width:108.3px"><span class=""><svg width="17" height="20" viewBox="0 0 17 20" fill="none" stroke="#e0426b" stroke-width="1.600" stroke-linecap="round" stroke-linejoin="round" style="vertical-align:middle"><path d="M1 4.600h15M5.700 4.400V2.300a1.200 1.200 0 0 1 1.200-1.200h3.200a1.200 1.200 0 0 1 1.200 1.200v2.100M2.700 4.800l.7 12.600a1.700 1.700 0 0 0 1.700 1.600h6.800a1.700 1.700 0 0 0 1.700-1.600l.7-12.600M6.700 9v5.800M10.300 9v5.800"/></svg></span></div><div class="td c" style="width:73.3px"><span id="d0_1" class="num">1.</span></div><div class="td l" style="width:193.5px"><span id="d0_2" style="letter-spacing:0.451px" class="num">RENT2100001</span></div><div class="td l" style="width:363.0px"><span id="d0_3" class=""><span class="th" id="th_a1">รถแบคโฮ</span> PC 200</span></div><div class="td l" style="width:194.2px"><span class="num"></span></div><div class="td c" style="width:145.3px"><span id="d0_5" class="num">1</span></div><div class="td l" style="width:145.3px"><span id="d0_6" class=""><span class="th kan">คัน</span></span></div><div class="td l" style="width:144.9px"><span class=""></span></div></div>
<div class="tr g"><div class="td c" style="width:108.3px"><span class=""><svg width="17" height="20" viewBox="0 0 17 20" fill="none" stroke="#e0426b" stroke-width="1.600" stroke-linecap="round" stroke-linejoin="round" style="vertical-align:middle"><path d="M1 4.600h15M5.700 4.400V2.300a1.200 1.200 0 0 1 1.200-1.200h3.200a1.200 1.200 0 0 1 1.200 1.200v2.100M2.700 4.800l.7 12.600a1.700 1.700 0 0 0 1.700 1.600h6.800a1.700 1.700 0 0 0 1.700-1.600l.7-12.600M6.700 9v5.800M10.300 9v5.800"/></svg></span></div><div class="td c" style="width:73.3px"><span id="d1_1" class="num">2.</span></div><div class="td l" style="width:193.5px"><span id="d1_2" style="letter-spacing:0.451px" class="num">RENT2100002</span></div><div class="td l" style="width:363.0px"><span id="d1_3" class=""><span class="th" id="th_a2a">รถ</span>10<span class="th" id="th_a2b">ล้อ</span> ISUZU</span></div><div class="td l" style="width:194.2px"><span id="d1_4" style="letter-spacing:1.226px" class="num">83-0162</span></div><div class="td c" style="width:145.3px"><span id="d1_5" class="num">1</span></div><div class="td l" style="width:145.3px"><span id="d1_6" class=""><span class="th kan">คัน</span></span></div><div class="td l" style="width:144.9px"><span class=""></span></div></div>
<div class="tr g"><div class="td c" style="width:108.3px"><span class=""><svg width="17" height="20" viewBox="0 0 17 20" fill="none" stroke="#e0426b" stroke-width="1.600" stroke-linecap="round" stroke-linejoin="round" style="vertical-align:middle"><path d="M1 4.600h15M5.700 4.400V2.300a1.200 1.200 0 0 1 1.200-1.200h3.200a1.200 1.200 0 0 1 1.200 1.200v2.100M2.700 4.800l.7 12.600a1.700 1.700 0 0 0 1.700 1.600h6.800a1.700 1.700 0 0 0 1.700-1.600l.7-12.600M6.700 9v5.800M10.300 9v5.800"/></svg></span></div><div class="td c" style="width:73.3px"><span id="d2_1" class="num">3.</span></div><div class="td l" style="width:193.5px"><span id="d2_2" style="letter-spacing:0.451px" class="num">RENT2100003</span></div><div class="td l" style="width:363.0px"><span id="d2_3" class=""><span class="th" id="th_a3" style="font-size:16.28px">รถเกลี่ยดิน</span></span></div><div class="td l" style="width:194.2px"><span class="num"></span></div><div class="td c" style="width:145.3px"><span id="d2_5" class="num">1</span></div><div class="td l" style="width:145.3px"><span id="d2_6" class=""><span class="th kan">คัน</span></span></div><div class="td l" style="width:144.9px"><span class=""></span></div></div>
<div class="tr y"><div class="td c" style="width:108.3px"><span class=""><svg width="17" height="20" viewBox="0 0 17 20" fill="none" stroke="#e0426b" stroke-width="1.600" stroke-linecap="round" stroke-linejoin="round" style="vertical-align:middle"><path d="M1 4.600h15M5.700 4.400V2.300a1.200 1.200 0 0 1 1.200-1.200h3.200a1.200 1.200 0 0 1 1.200 1.200v2.100M2.700 4.800l.7 12.600a1.700 1.700 0 0 0 1.700 1.600h6.800a1.700 1.700 0 0 0 1.700-1.600l.7-12.600M6.700 9v5.800M10.300 9v5.800"/></svg></span></div><div class="td c" style="width:73.3px"><span id="d3_1" class="num">4.</span></div><div class="td l" style="width:193.5px"><span id="d3_2" style="letter-spacing:0.962px;margin-left:1.2px" class="num">1212312121</span></div><div class="td l" style="width:363.0px"><span id="d3_3" class=""><span class="th" id="th_a4" style="font-size:16.36px">โทรศัพท์มือถือ</span></span></div><div class="td l" style="width:194.2px"><span id="d3_4" style="letter-spacing:0.972px" class="num">1212312121</span></div><div class="td c" style="width:145.3px"><span id="d3_5" class="num">1</span></div><div class="td l" style="width:145.3px"><span class=""></span></div><div class="td l" style="width:144.9px"><span class=""></span></div></div>
</div>
</div>
  </div>
</div>
</body>
</html>
